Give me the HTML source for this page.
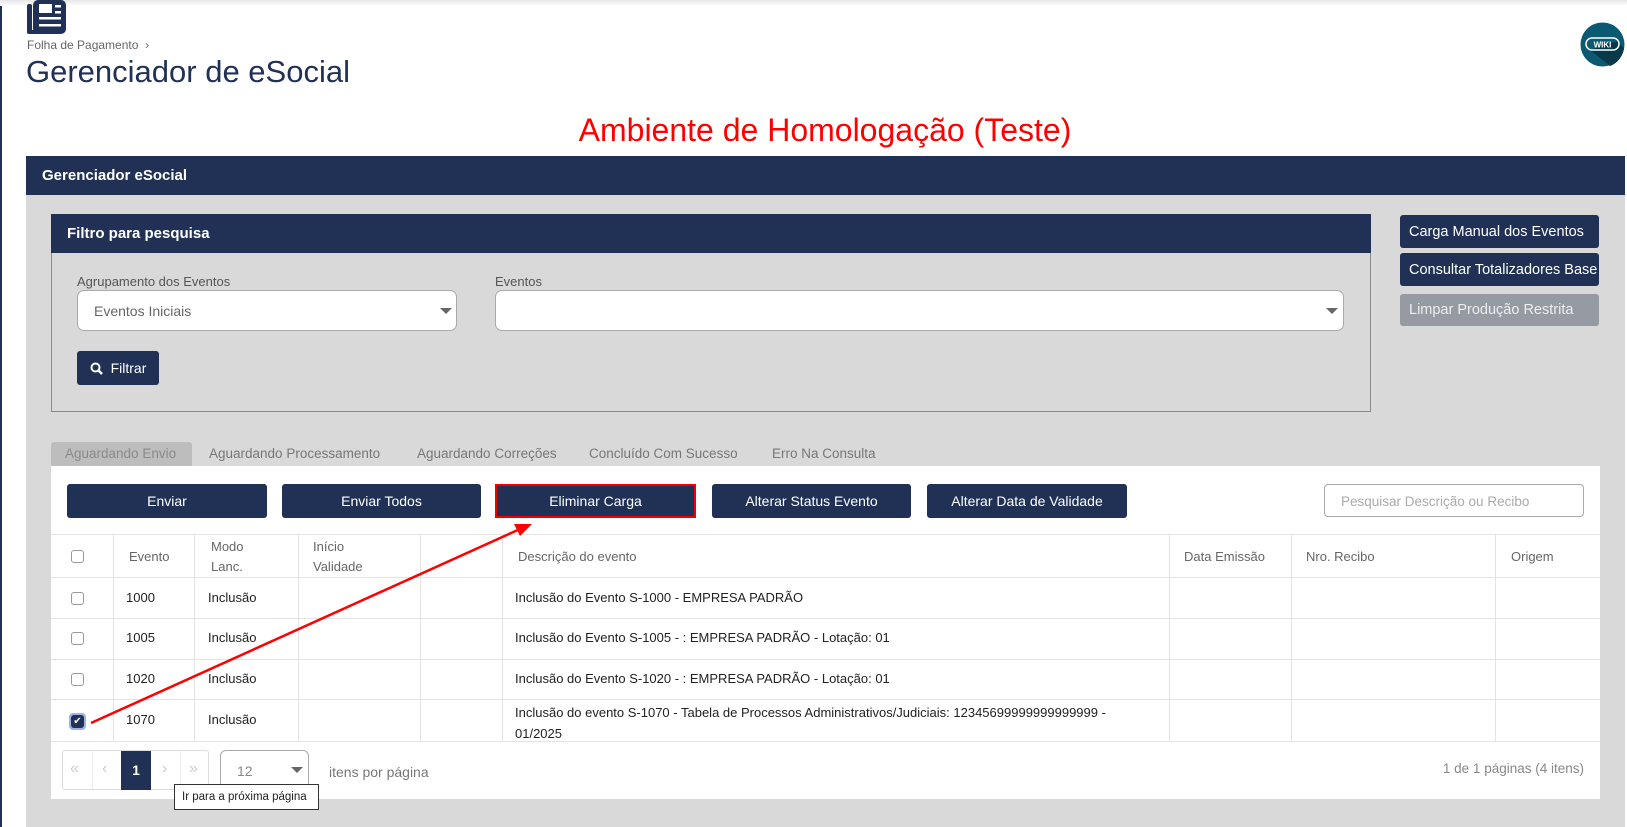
<!DOCTYPE html>
<html><head><meta charset="utf-8"><style>
*{box-sizing:border-box;margin:0;padding:0}
body{width:1627px;height:827px;position:relative;overflow:hidden;background:#fff;font-family:"Liberation Sans",sans-serif;color:#333}
.a{position:absolute}
.navy{background:#213155;color:#fff}
.btn{position:absolute;background:#213155;color:#fff;border-radius:3px;font-size:14px;display:flex;align-items:center;justify-content:center}
.th{position:absolute;font-size:13px;color:#666}
.td{position:absolute;font-size:13px;color:#222}
.cb{position:absolute;width:13px;height:13px;border:1px solid #999;border-radius:3px;background:#fff}
.vl{position:absolute;top:534px;height:207px;width:1px;background:#e3e3e3}
.hl{position:absolute;left:51px;width:1549px;height:1px;background:#e3e3e3}
</style></head><body>
<div class="a" style="left:0;top:0;width:2px;height:827px;background:#213155"></div>
<div class="a" style="left:0;top:0;width:1627px;height:6px;background:linear-gradient(#e6e6e6,#fff)"></div>
<svg class="a" style="left:27px;top:0" width="39" height="35" viewBox="0 0 39 35"><rect x="0" y="4" width="5" height="30" rx="2" fill="#213155"/><rect x="6" y="0" width="33" height="34" rx="5" fill="#213155"/><rect x="2" y="30" width="10" height="4" fill="#213155"/><rect x="12" y="4" width="13" height="9" fill="#fff"/><rect x="28" y="5" width="6" height="2.5" fill="#fff"/><rect x="28" y="11" width="6" height="2.5" fill="#fff"/><rect x="12" y="17" width="22" height="2.5" fill="#fff"/><rect x="12" y="24" width="22" height="2.5" fill="#fff"/></svg>
<div class="a" style="left:27px;top:38px;font-size:12px;color:#666">Folha de Pagamento &nbsp;›</div>
<div class="a" style="left:26px;top:54px;font-size:31px;color:#213155">Gerenciador de eSocial</div>
<svg class="a" style="left:1580px;top:22px" width="45" height="45" viewBox="0 0 45 45"><circle cx="22.5" cy="22.5" r="22" fill="#0c5a72"/><path d="M10 28 L30 44 A22 22 0 0 0 44 26 L37 19 Z" fill="#07394a"/><rect x="6" y="16" width="33" height="12" rx="6" fill="none" stroke="#fff" stroke-width="1.5"/><text x="22.5" y="25.5" font-size="8" font-weight="bold" fill="#fff" text-anchor="middle" font-family="Liberation Sans">WIKI</text></svg>
<div class="a" style="left:0;width:1650px;top:112px;text-align:center;font-size:32px;color:#f00">Ambiente de Homologação (Teste)</div>
<div class="a" style="left:26px;top:156px;width:1599px;height:671px;background:#d9d9d9"></div>
<div class="a navy" style="left:26px;top:156px;width:1599px;height:39px;font-size:15px;font-weight:bold;padding:11px 16px">Gerenciador eSocial</div>
<div class="a" style="left:51px;top:214px;width:1320px;height:198px;border:1px solid #8a8a8a"></div>
<div class="a navy" style="left:51px;top:214px;width:1320px;height:39px;font-size:15px;font-weight:bold;padding:11px 16px">Filtro para pesquisa</div>
<div class="a" style="left:77px;top:274px;font-size:13px;color:#555">Agrupamento dos Eventos</div>
<div class="a" style="left:495px;top:274px;font-size:13px;color:#555">Eventos</div>
<div class="a" style="left:77px;top:290px;width:380px;height:41px;background:#fff;border:1px solid #aaa;border-radius:7px;font-size:14px;color:#666;padding:12px 16px">Eventos Iniciais</div>
<div class="a" style="left:440px;top:308px;border:6px solid transparent;border-top:6px solid #666;border-bottom:0"></div>
<div class="a" style="left:495px;top:290px;width:849px;height:41px;background:#fff;border:1px solid #aaa;border-radius:7px"></div>
<div class="a" style="left:1326px;top:308px;border:6px solid transparent;border-top:6px solid #666;border-bottom:0"></div>
<div class="btn" style="left:77px;top:351px;width:82px;height:34px;font-size:14px"><svg width="13" height="13" viewBox="0 0 13 13" style="margin-right:8px"><circle cx="5.5" cy="5.5" r="4" fill="none" stroke="#fff" stroke-width="2"/><path d="M8.5 8.5 L12 12" stroke="#fff" stroke-width="2.5"/></svg>Filtrar</div>
<div class="btn" style="left:1400px;top:215px;width:199px;height:33px;font-size:14.5px;justify-content:flex-start;padding-left:9px">Carga Manual dos Eventos</div>
<div class="btn" style="left:1400px;top:253px;width:199px;height:33px;font-size:14.5px;justify-content:flex-start;padding-left:9px;white-space:nowrap;overflow:hidden">Consultar Totalizadores Base</div>
<div class="btn" style="left:1400px;top:294px;width:199px;height:32px;font-size:14.5px;justify-content:flex-start;padding-left:9px;background:#959aa3;color:#eee">Limpar Produção Restrita</div>
<div class="a" style="left:51px;top:442px;width:141px;height:24px;background:#bdbdbd;border-radius:3px 3px 0 0"></div>
<div class="a" style="left:65px;top:446px;font-size:13.5px;color:#8a8a8a">Aguardando Envio</div>
<div class="a" style="left:209px;top:446px;font-size:13.5px;color:#777">Aguardando Processamento</div>
<div class="a" style="left:417px;top:446px;font-size:13.5px;color:#777">Aguardando Correções</div>
<div class="a" style="left:589px;top:446px;font-size:13.5px;color:#777">Concluído Com Sucesso</div>
<div class="a" style="left:772px;top:446px;font-size:13.5px;color:#777">Erro Na Consulta</div>
<div class="a" style="left:51px;top:466px;width:1549px;height:333px;background:#fff"></div>
<div class="btn" style="left:67px;top:484px;width:200px;height:34px">Enviar</div>
<div class="btn" style="left:282px;top:484px;width:199px;height:34px">Enviar Todos</div>
<div class="btn" style="left:495px;top:484px;width:201px;height:34px;border:2px solid #e00;border-radius:0">Eliminar Carga</div>
<div class="btn" style="left:712px;top:484px;width:199px;height:34px">Alterar Status Evento</div>
<div class="btn" style="left:927px;top:484px;width:200px;height:34px">Alterar Data de Validade</div>
<div class="a" style="left:1324px;top:484px;width:260px;height:33px;border:1px solid #aaa;border-radius:4px;font-size:13.5px;color:#aaa;padding:9px 16px">Pesquisar Descrição ou Recibo</div>
<div class="hl" style="top:534px"></div><div class="hl" style="top:577px"></div><div class="hl" style="top:618px"></div><div class="hl" style="top:659px"></div><div class="hl" style="top:699px"></div><div class="hl" style="top:741px"></div>
<div class="vl" style="left:113px"></div><div class="vl" style="left:194px"></div><div class="vl" style="left:298px"></div><div class="vl" style="left:420px"></div><div class="vl" style="left:502px"></div><div class="vl" style="left:1169px"></div><div class="vl" style="left:1291px"></div><div class="vl" style="left:1495px"></div>
<div class="cb" style="left:71px;top:550px"></div>
<div class="th" style="left:129px;top:549px">Evento</div>
<div class="th" style="left:211px;top:537px;line-height:20px">Modo<br>Lanc.</div>
<div class="th" style="left:313px;top:537px;line-height:20px">Início<br>Validade</div>
<div class="th" style="left:518px;top:549px">Descrição do evento</div>
<div class="th" style="left:1184px;top:549px">Data Emissão</div>
<div class="th" style="left:1306px;top:549px">Nro. Recibo</div>
<div class="th" style="left:1511px;top:549px">Origem</div>
<div class="cb" style="left:71px;top:592px"></div><div class="td" style="left:126px;top:590px">1000</div><div class="td" style="left:208px;top:590px">Inclusão</div><div class="td" style="left:515px;top:590px">Inclusão do Evento S-1000 - EMPRESA PADRÃO</div>
<div class="cb" style="left:71px;top:632px"></div><div class="td" style="left:126px;top:630px">1005</div><div class="td" style="left:208px;top:630px">Inclusão</div><div class="td" style="left:515px;top:630px">Inclusão do Evento S-1005 - : EMPRESA PADRÃO - Lotação: 01</div>
<div class="cb" style="left:71px;top:673px"></div><div class="td" style="left:126px;top:671px">1020</div><div class="td" style="left:208px;top:671px">Inclusão</div><div class="td" style="left:515px;top:671px">Inclusão do Evento S-1020 - : EMPRESA PADRÃO - Lotação: 01</div>
<div class="a" style="left:69px;top:713px;width:17px;height:17px;border-radius:4px;background:#9fb2e6"></div>
<div class="a" style="left:71px;top:715px;width:13px;height:13px;border-radius:3px;background:#213155;color:#fff;font-size:10px;text-align:center;line-height:13px">✔</div>
<div class="td" style="left:126px;top:712px">1070</div><div class="td" style="left:208px;top:712px">Inclusão</div>
<div class="td" style="left:515px;top:702px;line-height:21px">Inclusão do evento S-1070 - Tabela de Processos Administrativos/Judiciais: 12345699999999999999 -<br>01/2025</div>
<div class="a" style="left:62px;top:750px;width:147px;height:40px;border:1px solid #ddd;border-radius:3px"></div>
<div class="a" style="left:92px;top:751px;width:1px;height:38px;background:#eee"></div>
<div class="a" style="left:121px;top:751px;width:30px;height:39px;background:#213155;color:#fff;font-weight:bold;font-size:14px;text-align:center;line-height:39px">1</div>
<div class="a" style="left:180px;top:751px;width:1px;height:38px;background:#eee"></div>
<div class="a" style="left:70px;top:760px;font-size:16px;color:#ccc">«</div><div class="a" style="left:102px;top:760px;font-size:16px;color:#ccc">‹</div><div class="a" style="left:162px;top:760px;font-size:16px;color:#ccc">›</div><div class="a" style="left:189px;top:760px;font-size:16px;color:#ccc">»</div>
<div class="a" style="left:220px;top:750px;width:89px;height:41px;border:1px solid #aaa;border-radius:6px;font-size:14px;color:#888;padding:12px 16px">12</div>
<div class="a" style="left:291px;top:767px;border:6px solid transparent;border-top:6px solid #666;border-bottom:0"></div>
<div class="a" style="left:329px;top:764px;font-size:14px;color:#777">itens por página</div>
<div class="a" style="left:1440px;top:761px;width:144px;text-align:right;font-size:13.5px;color:#888">1 de 1 páginas (4 itens)</div>
<div class="a" style="left:174px;top:784px;width:145px;height:26px;border:1px solid #333;background:#fff;font-size:11.5px;color:#222;padding:6px 7px;white-space:nowrap">Ir para a próxima página</div>
<svg class="a" style="left:0;top:0" width="1627" height="827"><line x1="91" y1="723" x2="520" y2="529" stroke="#f00" stroke-width="2.5"/><polygon points="532,524 514,524 520,536" fill="#f00"/></svg>
</body></html>
